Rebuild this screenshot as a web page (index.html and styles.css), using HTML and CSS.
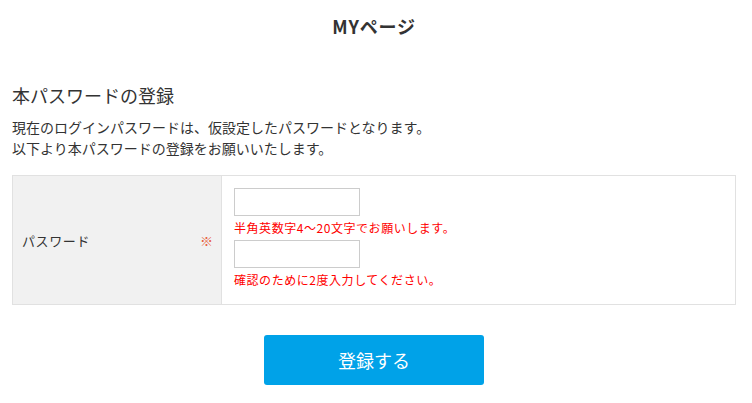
FILE: index.html
```html
<html>
  <head>
    <meta charset="utf-8">
    <title>MYページ</title>
    <link rel="stylesheet" href="styles.css">
  </head>
  <body>
    <div class="page">
      <h1 class="page-title">MYページ</h1>

      <h2 class="section-title">本パスワードの登録</h2>
      <p class="lead">現在のログインパスワードは、仮設定したパスワードとなります。<br>以下より本パスワードの登録をお願いいたします。</p>

      <form class="reg-form" action="">
        <div class="form-table">
          <div class="form-label">
            <span>パスワード</span>
            <span class="req">※</span>
          </div>
          <div class="form-field">
            <input type="password" class="pw-input">
            <p class="note">半角英数字4～20文字でお願いします。</p>
            <input type="password" class="pw-input">
            <p class="note">確認のために2度入力してください。</p>
          </div>
        </div>

        <div class="actions">
          <button type="submit" class="submit-btn">登録する</button>
        </div>
      </form>
    </div>
  </body>
</html>
```

FILE: styles.css
```css
body { margin: 0; background: #fff; color: #333; font-family: "Noto Sans CJK JP", "Noto Sans", sans-serif; }

.page { padding: 0 16px 0 12px; }

.page-title { margin: 0; padding-top: 14px; font-size: 18px; line-height: 24px; font-weight: bold; text-align: center; letter-spacing: .8px; }

.section-title { margin: 45px 0 10px; font-size: 18px; line-height: 24px; font-weight: normal; }

.lead { margin: 0 0 16px; font-size: 14px; line-height: 21px; }

.reg-form { margin: 0; }

.form-table{
  display:grid;
  grid-template-columns:209px 1fr;
  border:1px solid #e1e1e1;
}
.form-label{
  background:#f1f1f1;
  border-right:1px solid #e1e1e1;
  display:flex;
  align-items:center;
  justify-content:space-between;
  padding:0 8px 0 9px;
  font-size:13px;
  letter-spacing:.6px;
}
.form-label .req{
  color:#e8613c;
  font-size:13px;
  letter-spacing:0;
}
.form-field{
  padding:12px;
}
.pw-input{
  display:block;
  width:126px;
  height:28px;
  box-sizing:border-box;
  margin:0;
  padding:2px 4px;
  border:1px solid #ccc;
  border-radius:0;
  font-size:13px;
}
.note{
  margin:2px 0;
  font-size:12px;
  line-height:20px;
  color:#f00;
  letter-spacing:.55px;
}

.actions{
  margin-top:30px;
  display:flex;
  justify-content:center;
}
.submit-btn{
  width:220px;
  height:50px;
  background:#00a2e8;
  border:none;
  border-radius:3px;
  color:#fff;
  font-family:inherit;
  font-size:18px;
}
```
